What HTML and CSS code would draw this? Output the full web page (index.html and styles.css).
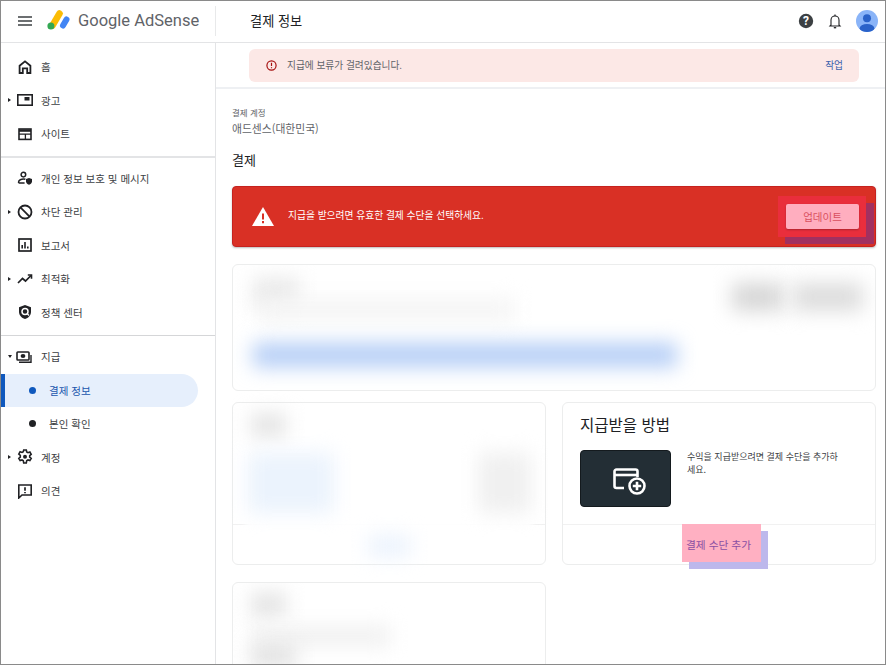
FILE: index.html
```html
<!DOCTYPE html>
<html lang="ko">
<head>
<meta charset="utf-8">
<title>결제 정보</title>
<link rel="stylesheet" href="styles.css">
</head>
<body>
<div class="app">
  <header class="topbar">
    <div class="brand">
      <svg class="menu" viewBox="0 0 14 10" width="14" height="10"><path d="M0 1h14M0 5h14M0 9h14" stroke="#3c4043" stroke-width="1.4"/></svg>
      <svg class="logo" viewBox="0 0 24 22" width="24" height="22">
        <path d="M5.500 15.500 12.500 3.500" stroke="#fbbc04" stroke-width="6.500" stroke-linecap="round"/>
        <path d="M16 15.500 19.500 9.500" stroke="#4285f4" stroke-width="6" stroke-linecap="round"/>
        <circle cx="3.900" cy="16" r="3.500" fill="#34a853"/>
      </svg>
      <span class="wordmark">Google AdSense</span>
    </div>
    <div class="page-title">결제 정보</div>
    <div class="top-actions">
      <svg viewBox="0 0 16 16" width="16" height="16"><circle cx="8" cy="8" r="7.2" fill="#3c4043"/><text x="8" y="12" text-anchor="middle" class="q">?</text></svg>
      <svg viewBox="0 0 14 16" width="14" height="16"><path d="M3 12V7a4 4 0 0 1 8 0v5l1 1H2z" fill="none" stroke="#202124" stroke-width="1.1"/><path d="M5.800 14.700h2.400" stroke="#202124" stroke-width="1.300"/><path d="M7 1.500v1.500" stroke="#202124" stroke-width="1.200"/></svg>
      <svg viewBox="0 0 22 22" width="22" height="22"><defs><clipPath id="av"><circle cx="11" cy="11" r="11"/></clipPath></defs><circle cx="11" cy="11" r="11" fill="#8ab4f8"/><g clip-path="url(#av)" fill="#2a62c9"><circle cx="11" cy="8.200" r="4"/><ellipse cx="11" cy="18.500" rx="7.400" ry="4.600"/></g></svg>
    </div>
  </header>
  <div class="main">
    <nav class="sidebar">
      <ul class="nav-group">
        <li class="nav-item"><span class="caret"></span><svg class="ic" viewBox="0 0 16 16"><path d="M2.600 14V6.800L8 2.400l5.400 4.400V14h-3.200V9.400H5.800V14z" fill="none" stroke="#202124" stroke-width="1.800"/></svg>홈</li>
        <li class="nav-item"><span class="caret right"></span><svg class="ic" viewBox="0 0 16 16"><rect x=".8" y="2.800" width="14.400" height="10.400" fill="none" stroke="#202124" stroke-width="1.600"/><rect x="7.500" y="5" width="5" height="3.500" fill="#202124"/></svg>광고</li>
        <li class="nav-item"><span class="caret"></span><svg class="ic" viewBox="0 0 16 16"><rect x="2" y="3" width="12" height="10.400" fill="none" stroke="#202124" stroke-width="1.600"/><path d="M2 4.600h12" stroke="#202124" stroke-width="2.400"/><path d="M2 8.200h12M8.400 8.200v5" stroke="#202124" stroke-width="1.300"/></svg>사이트</li>
      </ul>
      <ul class="nav-group">
        <li class="nav-item"><span class="caret"></span><svg class="ic" viewBox="0 0 16 16"><circle cx="6.400" cy="4.600" r="2.300" fill="none" stroke="#202124" stroke-width="1.500"/><path d="M1.600 13v-1c0-2 3-3 4.800-3 .8 0 1.400.1 2 .3M1.600 13h6" fill="none" stroke="#202124" stroke-width="1.500"/><path d="M12 8l3 1v2.400c0 1.600-1.300 2.800-3 3.400-1.700-.6-3-1.800-3-3.400V9z" fill="#202124"/></svg>개인 정보 보호 및 메시지</li>
        <li class="nav-item"><span class="caret right"></span><svg class="ic" viewBox="0 0 16 16"><circle cx="8" cy="8" r="6.500" fill="none" stroke="#202124" stroke-width="1.800"/><path d="M3.400 3.400l9.200 9.200" stroke="#202124" stroke-width="1.800"/></svg>차단 관리</li>
        <li class="nav-item"><span class="caret"></span><svg class="ic" viewBox="0 0 16 16"><rect x="2" y="2" width="12" height="12" fill="none" stroke="#202124" stroke-width="1.700"/><path d="M5.200 11.500V8M8 11.500V5M10.800 11.500V9.500" stroke="#202124" stroke-width="1.600"/></svg>보고서</li>
        <li class="nav-item"><span class="caret right"></span><svg class="ic" viewBox="0 0 16 16"><path d="M1 12l4.500-4.500 3 2.500L14 4.500" fill="none" stroke="#202124" stroke-width="1.700"/><path d="M10.800 4h3.700v3.700" fill="none" stroke="#202124" stroke-width="1.600"/></svg>최적화</li>
        <li class="nav-item"><span class="caret"></span><svg class="ic" viewBox="0 0 16 16"><path d="M8 1l6 2.200v4.600c0 3.500-2.500 6.200-6 7.200-3.500-1-6-3.700-6-7.200V3.200z" fill="#202124"/><circle cx="8" cy="7.500" r="3" fill="none" stroke="#fff" stroke-width="1.500"/><path d="M10 9.500l2 2" stroke="#fff" stroke-width="1.300"/></svg>정책 센터</li>
      </ul>
      <ul class="nav-group last">
        <li class="nav-item"><span class="caret down"></span><svg class="ic" viewBox="0 0 16 16"><rect x="1" y="3" width="12" height="8" rx=".8" fill="none" stroke="#202124" stroke-width="1.600"/><ellipse cx="7" cy="7" rx="2.400" ry="2" fill="#202124"/><path d="M3 13.300h12V6" fill="none" stroke="#202124" stroke-width="1.400"/></svg>지급</li>
        <li class="nav-sub active"><span class="dot"></span>결제 정보</li>
        <li class="nav-sub"><span class="dot"></span>본인 확인</li>
        <li class="nav-item"><span class="caret right"></span><svg class="ic" viewBox="0 0 16 16"><path d="M6.700 1h2.600l.4 2 1.300.7 1.900-.7 1.300 2.300-1.500 1.300v1.500l1.500 1.300-1.300 2.200-1.900-.7-1.300.8-.4 2.300H6.700l-.4-2.300-1.300-.8-1.900.7-1.300-2.200 1.500-1.300V6.300L1.800 5l1.300-2.300 1.900.7 1.300-.7z" fill="none" stroke="#202124" stroke-width="1.600"/><circle cx="8" cy="7.800" r="2" fill="#202124"/></svg>계정</li>
        <li class="nav-item"><span class="caret"></span><svg class="ic" viewBox="0 0 16 16"><path d="M1.800 2h12.400v10H5l-3.200 3z" fill="none" stroke="#202124" stroke-width="1.600"/><path d="M8 4.200v3.600M8 8.900v1.300" stroke="#202124" stroke-width="1.700"/></svg>의견</li>
      </ul>
    </nav>
    <main class="content">
      <div class="notice-wrap">
        <div class="notice">
          <svg viewBox="0 0 12 12" width="11" height="11"><circle cx="6" cy="6" r="5" fill="none" stroke="#a50e0e" stroke-width="1.300"/><path d="M6 3v3.600M6 7.800v1.200" stroke="#a50e0e" stroke-width="1.300"/></svg>
          <span class="notice-text">지급에 보류가 걸려있습니다.</span>
          <span class="notice-action">작업</span>
        </div>
      </div>
      <div class="page">
        <div class="account-label">결제 계정</div>
        <div class="account-name">애드센스(대한민국)</div>
        <h2 class="section-title">결제</h2>
        <div class="alert">
          <svg class="alert-icon" viewBox="0 0 22 19" width="22" height="19"><path d="M11 0l11 19H0z" fill="#fff"/><path d="M11 6.500v6M11 14v2.200" stroke="#d93025" stroke-width="2"/></svg>
          <span class="alert-text">지급을 받으려면 유효한 결제 수단을 선택하세요.</span>
          <div class="update-area">
            <span class="mark-shadow update-shadow"></span>
            <span class="mark update-mark"></span>
            <button class="update-btn">업데이트</button>
          </div>
        </div>
        <section class="card wide">
          <span class="blur b1"></span><span class="blur b2"></span><span class="blur b3"></span><span class="blur b4"></span><span class="blur b5"></span>
        </section>
        <div class="grid">
          <section class="card tall">
            <div class="card-foot"></div>
            <span class="blur c5"></span>
            <span class="blur c1"></span><span class="blur c2"></span><span class="blur c3"></span><span class="blur c4"></span>
          </section>
          <section class="card tall">
            <div class="pay-body">
              <h3 class="pay-title">지급받을 방법</h3>
              <div class="pay-row">
                <div class="pay-tile">
                  <svg viewBox="0 0 33 27" width="33" height="27">
                    <path d="M11 20H3.500a2 2 0 0 1-2-2V3.500a2 2 0 0 1 2-2h19a2 2 0 0 1 2 2V9" fill="none" stroke="#fff" stroke-width="2.600"/>
                    <path d="M1.500 7h23" stroke="#fff" stroke-width="2.600"/>
                    <circle cx="24" cy="18" r="7.500" fill="#232e35" stroke="#fff" stroke-width="2.600"/>
                    <path d="M24 13.800v8.400M19.800 18h8.400" stroke="#fff" stroke-width="2.600"/>
                  </svg>
                </div>
                <p class="pay-copy">수익을 지급받으려면 결제 수단을 추가하세요.</p>
              </div>
            </div>
            <div class="card-foot pay-foot">
              <span class="mark-shadow add-shadow"></span>
              <span class="mark add-mark"></span>
              <span class="add-link">결제 수단 추가</span>
            </div>
          </section>
          <section class="card tall">
            <span class="blur d1"></span><span class="blur d2"></span><span class="blur d3"></span>
          </section>
        </div>
      </div>
    </main>
  </div>
</div>
</body>
</html>
```
FILE: styles.css
```css
* { box-sizing: border-box; }
html, body { margin: 0; padding: 0; }
body { width: 886px; height: 665px; overflow: hidden; background: #fff; font-family: "Noto Sans CJK KR", "Noto Sans", sans-serif; color: #3c4043; }
ul { list-style: none; margin: 0; padding: 0; }
.app { width: 886px; height: 665px; border: 1px solid #8a8a8a; display: flex; flex-direction: column; overflow: hidden; }
.topbar { height: 42px; flex: none; display: flex; align-items: center; border-bottom: 1px solid #e3e4e6; padding-bottom: 2px; }
.brand { width: 215px; height: 30px; display: flex; align-items: center; border-right: 1px solid #e8e9ea; padding-left: 17px; }
.logo { margin-left: 15px; }
.wordmark { margin-left: 7px; font-family: "Roboto", "Liberation Sans", sans-serif; font-size: 16.500px; color: #5f6368; white-space: nowrap; }
.page-title { margin-left: 34px; font-size: 13.200px; color: #202124; }
.top-actions { margin-left: auto; display: flex; align-items: center; gap: 14px; padding-right: 7px; }
.q { font: 700 12px "Roboto", sans-serif; fill: #fff; }
.main { flex: 1; display: flex; min-height: 0; }
.sidebar { width: 215px; flex: none; border-right: 1px solid #e3e4e6; padding-top: 7px; }
.nav-group { border-bottom: 2px solid #e3e4e6; padding-bottom: 5px; margin-bottom: 4px; }
.nav-group:nth-child(2) { border-bottom-width: 1px; border-color: #d5d6d8; padding-bottom: 6px; }
.nav-group.last { border: 0; }
.nav-item { height: 33.500px; display: flex; align-items: center; font-size: 10.500px; padding-left: 7px; color: #3c4043; white-space: nowrap; }
.caret { width: 4px; height: 6px; flex: none; margin-right: 5px; }
.caret.right { width: 0; height: 0; border-left: 3px solid #202124; border-top: 2.500px solid transparent; border-bottom: 2.500px solid transparent; margin-right: 6px; }
.caret.down { width: 0; height: 0; border-top: 3px solid #202124; border-left: 2.500px solid transparent; border-right: 2.500px solid transparent; margin-right: 4px; }
.ic { width: 16px; height: 16px; flex: none; margin-right: 8px; }
.nav-item .caret.down + .ic { margin-right: 9px; }
.nav-sub { height: 33.500px; width: 197px; display: flex; align-items: center; font-size: 10.500px; padding-left: 28px; white-space: nowrap; }
.nav-sub .dot { width: 7px; height: 7px; border-radius: 50%; background: #202124; margin-right: 13px; }
.nav-sub.active { background: #e6effc; border-left: 4px solid #0f58bd; border-radius: 0 17px 17px 0; color: #1a56ad; padding-left: 24px; }
.nav-sub.active .dot { background: #0f58bd; }
.content { flex: 1; min-width: 0; overflow: hidden; }
.notice-wrap { height: 46px; padding: 6px 26px 0 33px; border-bottom: 2px solid #eef0f3; }
.notice { height: 33px; background: #fce8e6; border-radius: 6px; display: flex; align-items: center; padding: 0 16px 1px 17px; font-size: 9.700px; color: #5f6368; }
.notice-text { margin-left: 10px; }
.notice-action { margin-left: auto; color: #3a62ad; }
.page { padding: 17px 9px 0 16px; }
.account-label { font-size: 8.500px; line-height: 12px; color: #5f6368; }
.account-name { font-size: 10.800px; line-height: 18px; margin-top: 1px; color: #5f6368; }
.section-title { font-size: 13px; font-weight: 400; line-height: 20px; margin: 13px 0 16px; color: #202124; }
.alert { height: 61px; background: #d93025; border: 1px solid #c5221f; border-radius: 4px; box-shadow: 0 1px 2px rgba(60, 64, 67, .35); display: flex; align-items: center; padding-left: 19px; }
.alert-text { margin: 0 0 3px 14px; font-size: 9.750px; color: #fff; }
.update-area { margin-left: auto; position: relative; width: 73px; height: 25px; margin-right: 16px; }
.update-btn { position: absolute; inset: 0; border: 0; border-radius: 2px; background: #ffaebf; color: #d9505e; font: 10.500px "Noto Sans CJK KR", sans-serif; padding: 0; box-shadow: 0 1px 2px rgba(0,0,0,.25); }
.mark, .mark-shadow { position: absolute; display: block; }
.mark { background: #e92e3c; }
.mark-shadow { background: #a13060; }
.update-mark { left: -8px; top: -8px; width: 88px; height: 41px; }
.update-shadow { left: -1px; top: -1px; width: 89px; height: 41px; }
.card { border: 1px solid #eceded; border-radius: 6px; background: #fff; position: relative; overflow: hidden; }
.wide { height: 127px; margin-top: 17px; }
.grid { display: grid; grid-template-columns: 314px 314px; column-gap: 16px; row-gap: 17px; margin-top: 11px; }
.tall { height: 163px; display: flex; flex-direction: column; overflow: visible; }
.tall:nth-child(3) { overflow: hidden; height: 100px; }
.card-foot { margin-top: auto; height: 40px; border-top: 1px solid #f1f1f1; position: relative; }
.pay-body { padding: 9px 17px 0; }
.pay-title { font-size: 15.500px; font-weight: 400; line-height: 24px; margin: 0 0 14px; color: #202124; }
.pay-row { display: flex; gap: 16px; }
.pay-tile { width: 91px; height: 57px; flex: none; border-radius: 4px; background: #232e35; border: 1px solid #141a1e; display: flex; align-items: center; justify-content: center; padding: 6px 0 0 7px; }
.pay-copy { margin: 1px 0 0; font-size: 9px; line-height: 12.500px; width: 155px; color: #3c4043; }
.pay-foot { display: flex; justify-content: center; align-items: center; padding-bottom: 1px; }
.add-mark { left: 119px; top: -1px; width: 79px; height: 38px; background: #ffb0c2; }
.add-shadow { left: 126px; top: 6px; width: 79px; height: 38px; background: #bdb8ec; }
.add-link { position: relative; font-size: 10.700px; color: #8a4fa3; margin-left: -1px; }
.blur { position: absolute; display: block; filter: blur(10px); }
.b1 { left: 20px; top: 13px; width: 46px; height: 30px; background: #e9e9e9; }
.b2 { left: 26px; top: 33px; width: 256px; height: 23px; background: #f5f5f5; }
.b3 { left: 20px; top: 78px; width: 424px; height: 24px; background: #b3cdf6; }
.b4 { left: 499px; top: 18px; width: 52px; height: 28px; background: #d6d6d6; }
.b5 { left: 560px; top: 18px; width: 70px; height: 28px; background: #dcdcdc; }
.c1 { left: 18px; top: 11px; width: 35px; height: 22px; background: #e2e2e2; }
.c2 { left: 15px; top: 50px; width: 86px; height: 60px; background: #ebf3fd; }
.c3 { left: 245px; top: 50px; width: 53px; height: 60px; background: #f0f0f0; }
.c4 { left: 135px; top: 133px; width: 43px; height: 20px; background: #eaf2fd; }
.c5 { left: 12px; top: 116px; width: 288px; height: 10px; background: #fff; filter: blur(3px); }
.d1 { left: 18px; top: 10px; width: 35px; height: 23px; background: #e2e2e2; }
.d2 { left: 18px; top: 43px; width: 140px; height: 20px; background: #f0f0f0; }
.d3 { left: 18px; top: 63px; width: 45px; height: 20px; background: #dedede; }
```
